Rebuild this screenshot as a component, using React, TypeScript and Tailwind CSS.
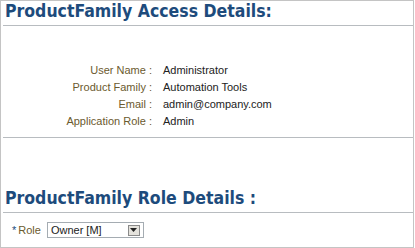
import React from "react";

const rows = [
  { label: "User Name :", value: "Administrator" },
  { label: "Product Family :", value: "Automation Tools" },
  { label: "Email :", value: "admin@company.com" },
  { label: "Application Role :", value: "Admin" },
];

const Heading = ({ children }: { children: React.ReactNode }) => (
  <div>
    <h2 className="pl-[4px] text-[17.5px] leading-[20px] font-bold text-[#1d4b7c] font-['DejaVu_Sans_Condensed',sans-serif]">
      {children}
    </h2>
    <div className="ml-[2px] mt-[4px] border-b border-[#b8bcc0]" />
  </div>
);

const App = () => {
  return (
    <div className="w-[414px] h-[248px] border border-[#c4c4c4] bg-white font-['Liberation_Sans',sans-serif] text-[11px]">
      <Heading>ProductFamily Access Details:</Heading>
      <div className="pt-[36px] pb-[7px]">
        {rows.map((r) => (
          <div key={r.label} className="grid grid-cols-[151px_1fr] gap-x-[11px] h-[17px] items-center">
            <p className="text-right text-[#6b5a2e]">{r.label}</p>
            <p className="text-[#222]">{r.value}</p>
          </div>
        ))}
      </div>
      <div className="ml-[2px] border-b border-[#b8bcc0]" />
      <div className="pt-[50px]">
        <Heading>ProductFamily Role Details :</Heading>
      </div>
      <div className="flex items-center pl-[11px] pt-[9px]">
        <span className="text-[#1d4b7c] mr-[2px]">*</span>
        <span className="text-[#6b5a2e] mr-[6px]">Role</span>
        <div className="flex items-center w-[97px] h-[16px] border border-[#a5acb2] bg-white pl-[3px] pr-[3px]">
          <span className="flex-1 text-[#222]">Owner [M]</span>
          <div className="w-[12px] h-[11px] border border-[#8a8a8a] bg-[#e4e2dc] flex items-center justify-center">
            <svg width="7" height="4" viewBox="0 0 7 4">
              <path d="M0 0h7L3.5 4z" fill="#222" />
            </svg>
          </div>
        </div>
      </div>
    </div>
  );
};

export default App;
